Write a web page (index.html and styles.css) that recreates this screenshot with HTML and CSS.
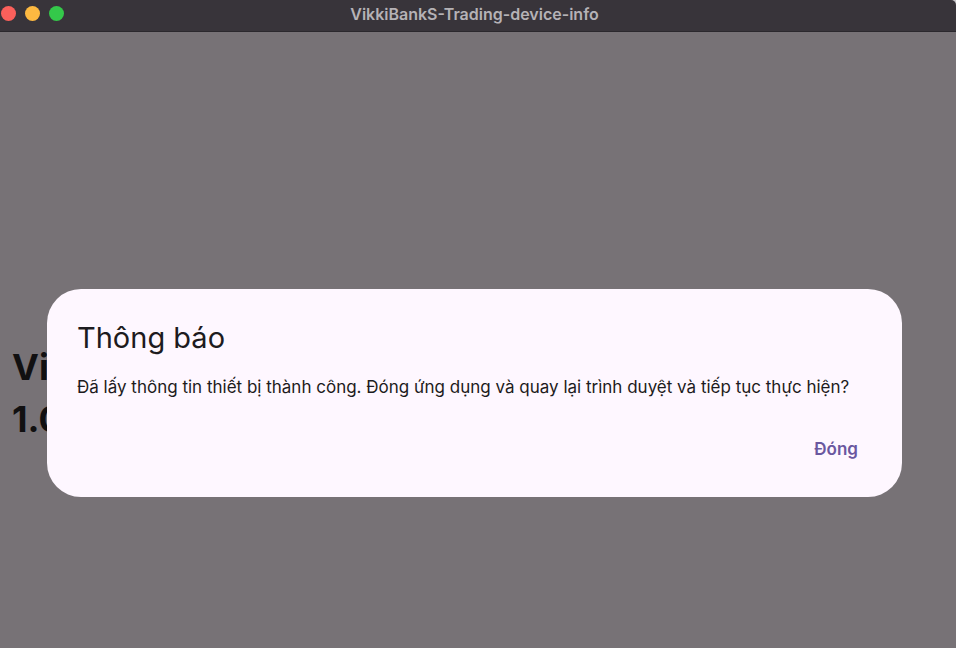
FILE: index.html
```html
<!DOCTYPE html>
<html lang="vi">
<head>
<meta charset="utf-8">
<title>VikkiBankS-Trading-device-info</title>
<link rel="stylesheet" href="styles.css">
</head>
<body>
<header class="titlebar">
  <div class="controls">
    <button class="control close" type="button" aria-label="Close"></button>
    <button class="control minimize" type="button" aria-label="Minimize"></button>
    <button class="control zoom" type="button" aria-label="Zoom"></button>
  </div>
  <h1 class="window-title">VikkiBankS-Trading-device-info</h1>
</header>
<main class="content">
  <p class="app-info">Vi<br>1.0</p>
  <div class="overlay">
    <section class="dialog" role="dialog" aria-modal="true" aria-labelledby="dialog-title">
      <h2 class="dialog-title" id="dialog-title">Thông báo</h2>
      <p class="dialog-text">Đã lấy thông tin thiết bị thành công. Đóng ứng dụng và quay lại trình duyệt và tiếp tục thực hiện?</p>
      <div class="actions">
        <button class="action" type="button">Đóng</button>
      </div>
    </section>
  </div>
</main>
</body>
</html>
```

FILE: styles.css
```css
* {
  box-sizing: border-box;
}

body {
  margin: 0;
  min-height: 100vh;
  display: flex;
  flex-direction: column;
  background: #c8c6c9;
  font-family: Inter, "Liberation Sans", sans-serif;
  color: #1d1b20;
}

.titlebar {
  display: grid;
  grid-template-columns: 1fr auto 1fr;
  align-items: center;
  height: 32px;
  padding: 0 8px 4px 1px;
  background: #38343a;
  border-bottom: 1px solid #2b282d;
  border-top-right-radius: 5px;
}

.controls {
  display: flex;
  gap: 9px;
}

.control {
  width: 15px;
  height: 15px;
  padding: 0;
  border: 0;
  border-radius: 50%;
}

.close {
  background: #fb605b;
}

.minimize {
  background: #fdb941;
}

.zoom {
  background: #34c84a;
}

.window-title {
  margin: 0;
  font-size: 16px;
  line-height: 20px;
  font-weight: 600;
  color: #b5b2b6;
}

.content {
  position: relative;
  flex: 1;
  display: flex;
  align-items: center;
  padding: 106px 12px 0;
  background: #777276;
}

.app-info {
  margin: 0;
  font-size: 36px;
  line-height: 52px;
  font-weight: 700;
  color: #111011;
}

.overlay {
  position: absolute;
  inset: 0;
  display: flex;
  align-items: center;
  justify-content: center;
  padding: 106px 54px 0 47px;
}

.dialog {
  width: 100%;
  padding: 30px 30px 26px;
  border-radius: 34px;
  background: #fef7ff;
}

.dialog-title {
  margin: 0;
  font-size: 29px;
  line-height: 38px;
  font-weight: 400;
}

.dialog-text {
  margin: 18px 0 0;
  font-size: 17px;
  line-height: 24px;
}

.actions {
  display: flex;
  justify-content: flex-end;
  margin-top: 28px;
}

.action {
  padding: 12px 14px;
  border: 0;
  background: none;
  font: inherit;
  font-size: 17px;
  line-height: 20px;
  font-weight: 600;
  color: #6a579f;
}
```
